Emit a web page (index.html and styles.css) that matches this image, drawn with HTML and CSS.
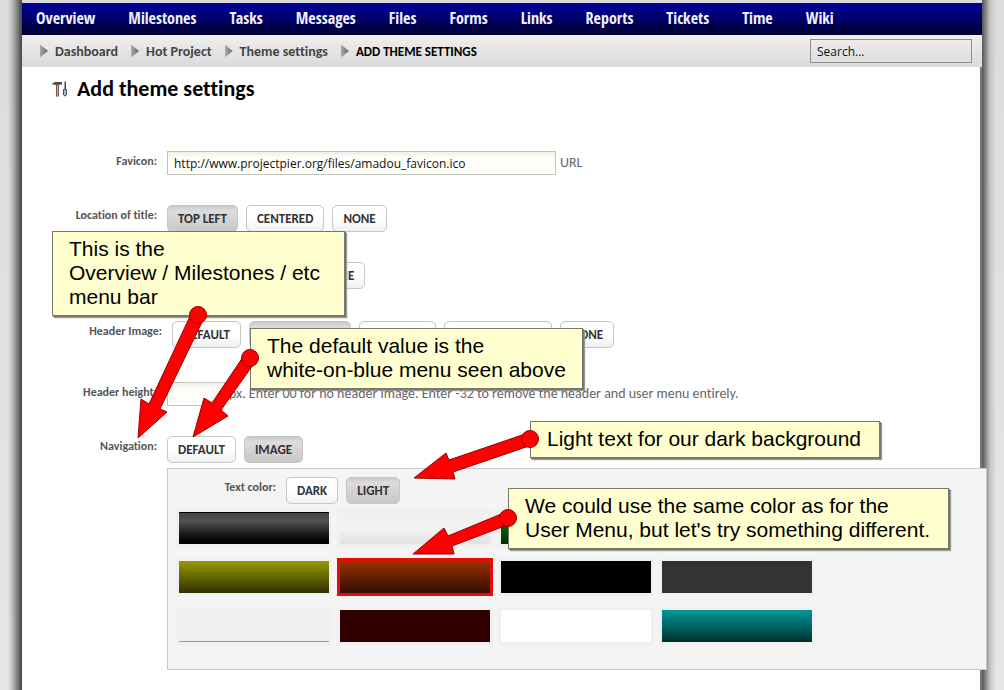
FILE: index.html
```
<!DOCTYPE html>
<html lang="en">
<head>
<meta charset="utf-8">
<title>Add theme settings</title>
<link rel="stylesheet" href="styles.css">
</head>
<body>
<div class="shade">
  <div class="sheet">
    <nav class="menu" aria-label="Main">
      <a href="#">Overview</a>
      <a href="#">Milestones</a>
      <a href="#">Tasks</a>
      <a href="#">Messages</a>
      <a href="#">Files</a>
      <a href="#">Forms</a>
      <a href="#">Links</a>
      <a href="#">Reports</a>
      <a href="#">Tickets</a>
      <a href="#">Time</a>
      <a href="#">Wiki</a>
    </nav>
    <div class="crumbbar">
      <ol class="crumbs">
        <li><a href="#">Dashboard</a></li>
        <li><a href="#">Hot Project</a></li>
        <li><a href="#">Theme settings</a></li>
        <li class="current">ADD THEME SETTINGS</li>
      </ol>
      <input class="search" type="text" value="Search..." aria-label="Search">
    </div>
    <main class="content">
      <h1 class="title">
        <svg class="tools" width="16" height="16" viewBox="0 0 16 16" aria-hidden="true">
          <path d="M0 4 Q1 1 4 1 H10 V3.500 H7.500 V4 H3.500 Q2 3 0 4Z" fill="#4a4a4c"/>
          <path d="M4 3.500h3V15.500H4z" fill="#7a5a48"/>
          <path d="M5 4h1v11H5z" fill="#c9a68c"/>
          <path d="M12.500 0.500h1.500v8h-1.500z" fill="#444"/>
          <path d="M11.500 8.500h3V14q-1.500 2-3 0z" fill="#a4bcdc" stroke="#3c4c6c" stroke-width="1"/>
        </svg>
        Add theme settings
      </h1>
      <form class="form">
        <div class="row">
          <label class="label" for="favicon">Favicon:</label>
          <div class="field"><input class="text text-wide" id="favicon" type="text" value="http://www.projectpier.org/files/amadou_favicon.ico"><span class="hint">URL</span></div>
        </div>
        <div class="row">
          <span class="label" id="l-title">Location of title:</span>
          <div class="field group" role="group" aria-labelledby="l-title">
            <button type="button" class="btn on">TOP LEFT</button>
            <button type="button" class="btn">CENTERED</button>
            <button type="button" class="btn">NONE</button>
          </div>
        </div>
        <div class="row row-short">
          <span class="label"></span>
          <div class="field group">
            <button type="button" class="btn w-70" aria-label="Option 1"></button>
            <button type="button" class="btn w-58" aria-label="Option 2"></button>
            <button type="button" class="btn">NONE</button>
          </div>
        </div>
        <div class="row row-indent">
          <span class="label" id="l-image">Header Image:</span>
          <div class="field group" role="group" aria-labelledby="l-image">
            <button type="button" class="btn">DEFAULT</button>
            <button type="button" class="btn on w-102" aria-label="Option 2"></button>
            <button type="button" class="btn w-77" aria-label="Option 3"></button>
            <button type="button" class="btn w-108" aria-label="Option 4"></button>
            <button type="button" class="btn">NONE</button>
          </div>
        </div>
        <div class="row">
          <label class="label" for="height">Header height:</label>
          <div class="field"><input class="text text-narrow" id="height" type="text"><span class="hint">px. Enter 00 for no header image. Enter -32 to remove the header and user menu entirely.</span></div>
        </div>
        <div class="row row-last">
          <span class="label" id="l-nav">Navigation:</span>
          <div class="field group" role="group" aria-labelledby="l-nav">
            <button type="button" class="btn">DEFAULT</button>
            <button type="button" class="btn on">IMAGE</button>
          </div>
        </div>
        <section class="panel">
          <div class="row row-color">
            <span class="label" id="l-color">Text color:</span>
            <div class="field group" role="group" aria-labelledby="l-color">
              <button type="button" class="btn">DARK</button>
              <button type="button" class="btn on">LIGHT</button>
            </div>
          </div>
          <div class="swatches" role="radiogroup" aria-label="Navigation image">
            <input class="swatch charcoal" type="radio" name="image" aria-label="Charcoal">
            <input class="swatch pale" type="radio" name="image" aria-label="Pale">
            <input class="swatch green" type="radio" name="image" aria-label="Green">
            <input class="swatch pale" type="radio" name="image" aria-label="Light">
            <input class="swatch olive" type="radio" name="image" aria-label="Olive">
            <input class="swatch rust" type="radio" name="image" aria-label="Rust" checked>
            <input class="swatch black" type="radio" name="image" aria-label="Black">
            <input class="swatch gray" type="radio" name="image" aria-label="Gray">
            <input class="swatch lined" type="radio" name="image" aria-label="Lined">
            <input class="swatch maroon" type="radio" name="image" aria-label="Maroon">
            <input class="swatch white" type="radio" name="image" aria-label="White">
            <input class="swatch teal" type="radio" name="image" aria-label="Teal">
          </div>
        </section>
      </form>
    </main>
  </div>
</div>
<p class="note note-menu">This is the<br>Overview / Milestones / etc<br>menu bar</p>
<p class="note note-default">The default value is the<br>white-on-blue menu seen above</p>
<p class="note note-light">Light text for our dark background</p>
<p class="note note-image">We could use the same color as for the<br>User Menu, but let's try something different.</p>
<svg class="arrows" width="1004" height="690" viewBox="0 0 1004 690" aria-hidden="true">
  <path d="M192 312 149 404 141 399 138 438 167 412 160 409 204 318Z"/><circle cx="198" cy="315" r="8.500"/>
  <path d="M245 354 212 403 204 398 193 437 228 416 221 410 255 362Z"/><circle cx="250" cy="358" r="8.500"/>
  <path d="M528 433 449 460 446 453 414 478 455 479 453 472 532 445Z"/><circle cx="530" cy="439" r="8.500"/>
  <path d="M506 512 448 536 444 528 413 554 454 554 452 546 510 524Z"/><circle cx="508" cy="518" r="8.500"/>
</svg>
</body>
</html>
```
FILE: styles.css
```
* { box-sizing: border-box; }
body {
  margin: 0;
  position: relative;
  background: linear-gradient(#dcdcdc, #e6e6e6 690px);
  font-family: Carlito, "Open Sans", sans-serif;
  font-size: 12px;
  font-variant-ligatures: none;
  color: #444;
  overflow: hidden;
}
a { color: inherit; text-decoration: none; }
.shade {
  margin: 0 8px;
  padding: 3px 14px 0;
  background:
    linear-gradient(to left, #444, #777 4px, #b4b4b4 9px, transparent) left / 14px 100% no-repeat,
    linear-gradient(to right, #555, #8a8a8a 4px, #c4c4c4 8px, transparent) right / 14px 100% no-repeat;
}
.sheet {
  min-height: calc(100vh - 3px);
  background: #fff;
}
.menu {
  display: flex;
  gap: 33px;
  padding: 0 14px;
  height: 32px;
  line-height: 31px;
  background: linear-gradient(#0000a0, #000030);
  color: #f0f0ff;
  font-family: "Liberation Sans Narrow", "Open Sans Condensed", "Roboto Condensed", "Liberation Sans", sans-serif;
  font-size: 16px;
  font-weight: bold;
}
.crumbbar {
  display: flex;
  justify-content: space-between;
  align-items: center;
  height: 32px;
  padding: 0 10px 0 18px;
  background: linear-gradient(#efefef, #dadada);
}
.crumbs {
  display: flex;
  gap: 13px;
  margin: 0;
  padding: 0;
  list-style: none;
  font-size: 14px;
  font-weight: 600;
}
.crumbs li { display: flex; align-items: center; gap: 7px; }
.crumbs li::before {
  content: "";
  width: 8px;
  height: 13px;
  background: linear-gradient(90deg, #aaa, #666);
  clip-path: polygon(0 0, 100% 50%, 0 100%);
}
.crumbs .current { color: #000; font-size: 13px; font-weight: bold; }
.search {
  width: 162px;
  height: 24px;
  padding: 0 6px;
  border: 1px solid #8f8f88;
  background: transparent;
  font: 12px "Open Sans", sans-serif;
  color: #111;
}
.content {
  min-height: calc(100vh - 67px);
  padding: 7px 0 0 30px;
  border-right: 2px solid #777;
}
.title {
  display: flex;
  align-items: center;
  gap: 9px;
  margin: 0 0 48px;
  height: 29px;
  font-size: 22px;
  line-height: 29px;
  color: #000;
}
.row { display: flex; align-items: flex-start; gap: 10px; margin-bottom: 30px; }
.row-short { margin-bottom: 32px; }
.row-indent { padding-left: 5px; margin-bottom: 34px; }
.row-last { margin-bottom: 5px; }
.label {
  width: 105px;
  line-height: 20px;
  text-align: right;
  white-space: nowrap;
  font-size: 12px;
  font-weight: 600;
  color: #555;
}
.field { display: flex; gap: 4px; align-items: center; }
.group { gap: 8px; }
.text {
  height: 24px;
  padding: 0 6px;
  border: 1px solid #c4c4bc;
  background: linear-gradient(#f0f0e8, #fffffa 6px);
  font: 12px "Open Sans", sans-serif;
  color: #111;
}
.text-wide { width: 389px; }
.text-narrow { width: 58px; }
.hint { font-size: 14px; line-height: 20px; color: #666; white-space: nowrap; }
.btn {
  height: 27px;
  padding: 0 10px;
  border: 1px solid #c6c6c6;
  border-radius: 5px;
  background: linear-gradient(#fff 50%, #f0f0f0);
  font: bold 13px Carlito, "Open Sans", sans-serif;
  color: #333;
}
.btn.on { background: linear-gradient(#cacaca, #dcdcdc 5px, #c8c8c8); }
.w-58 { width: 58px; }
.w-70 { width: 70px; }
.w-77 { width: 77px; }
.w-102 { width: 102px; }
.w-108 { width: 108px; }
.panel {
  margin: 0 -7px 0 115px;
  padding: 8px 8px 24px;
  border: 1px solid #c8c8c8;
  background: #f4f4f4;
}
.row-color { margin-bottom: 5px; }
.row-color .label { width: 100px; }
.swatches { display: grid; grid-template-columns: repeat(4, 156px); gap: 11px 5px; }
.swatch {
  appearance: none;
  height: 38px;
  margin: 0;
  border: 3px solid #f0f0f0;
}
.swatch:checked { border-color: #e80c08; }
.charcoal { background-image: linear-gradient(#000 1px, #444 1px, #505050 9px, #000 29px); }
.pale { background-image: linear-gradient(#efefef, #f4f4f2 50%, #e2e2e2); }
.green { background-image: linear-gradient(#009000, #003000); }
.olive { background-image: linear-gradient(#9a9a00, #303000); }
.rust { background-image: linear-gradient(#9a3200, #300c00); }
.black { background-color: #000; }
.gray { background-color: #333; }
.lined { background-image: linear-gradient(#efefef 31px, #999 31px); }
.maroon { background-color: #300000; }
.white { background-color: #fff; }
.teal { background-image: linear-gradient(#009898, #003030); }
.note {
  position: absolute;
  margin: 0;
  padding: 5px 16px 6px;
  border: 1px solid #77776a;
  background: #ffffcf;
  box-shadow: 1px 1px 0 #77776a, 2px 2px 1px #999;
  font: 21px/24px "Liberation Sans", Arial, sans-serif;
  color: #000;
  white-space: nowrap;
}
.note-menu { left: 52px; top: 231px; width: 293px; }
.note-default { left: 250px; top: 328px; width: 333px; }
.note-light { left: 530px; top: 421px; width: 350px; }
.note-image { left: 508px; top: 488px; width: 441px; }
.arrows { position: absolute; left: 0; top: 0; fill: #f00; stroke: #900; stroke-width: 1; pointer-events: none; }
```
